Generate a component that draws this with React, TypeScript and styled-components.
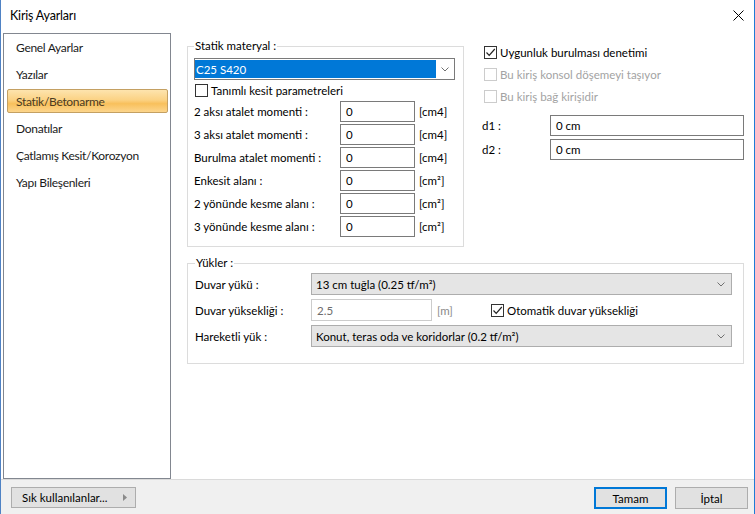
import styled, { createGlobalStyle } from "styled-components";

const GlobalStyle = createGlobalStyle`
  html, body {
    margin: 0;
    padding: 0;
    background: #ffffff;
  }
  body {
    font-family: Lato, "Noto Sans", sans-serif;
    color: #000000;
  }
`;

const Window = styled.div`
  width: 755px;
  height: 514px;
  box-sizing: border-box;
  border-left: 1px solid #4f82c4;
  border-right: 1px solid #1f7bd6;
  background: #ffffff;
  display: flex;
  flex-direction: column;
  overflow: hidden;
`;

const TitleBar = styled.div`
  height: 30px;
  flex: none;
  display: flex;
  align-items: center;
  justify-content: space-between;
  padding: 0 10px 0 9px;
  font-size: 12.5px;
  letter-spacing: -0.2px;
`;

const Body = styled.div`
  height: 450px;
  flex: none;
  box-sizing: border-box;
  border-bottom: 1px solid #dadada;
  display: flex;
  align-items: stretch;
  padding-left: 2px;
`;

const Sidebar = styled.div`
  width: 168px;
  flex: none;
  margin-top: 3px;
  box-sizing: border-box;
  border: 1px solid #828790;
  background: #ffffff;
  padding: 1px 2px 0 3px;
  display: flex;
  flex-direction: column;
  gap: 3px;
`;

const NavItem = styled.div<{ $active?: boolean }>`
  height: 24px;
  box-sizing: border-box;
  display: flex;
  align-items: center;
  padding-left: 8px;
  font-size: 12px;
  letter-spacing: -0.3px;
  border: 1px solid ${(p) => (p.$active ? "#c4a062" : "transparent")};
  border-radius: 2px;
  color: ${(p) => (p.$active ? "#4b3a22" : "#1b1b1b")};
  background: ${(p) =>
    p.$active
      ? "linear-gradient(#fde4ae 0%, #fbd284 45%, #f8c05c 62%, #fcd58c 100%)"
      : "transparent"};
`;

const Content = styled.div`
  flex: 1;
  padding: 9px 10px 0 16px;
  display: flex;
  flex-direction: column;
  gap: 9px;
  font-size: 11.5px;
`;

const TopRow = styled.div`
  display: flex;
  gap: 18px;
  align-items: flex-start;
`;

const Group = styled.fieldset<{ $width?: number; $pad: string }>`
  margin: 0;
  box-sizing: border-box;
  width: ${(p) => (p.$width ? `${p.$width}px` : "auto")};
  min-width: 0;
  border: 1px solid #dcdcdc;
  padding: ${(p) => p.$pad};
  display: flex;
  flex-direction: column;
`;

const Legend = styled.legend`
  padding: 0 1px;
  font-size: 11.5px;
  line-height: 14px;
`;

const Combo = styled.div`
  margin-top: 5px;
  height: 22px;
  box-sizing: border-box;
  border: 1px solid #7a7a7a;
  padding: 1px 0;
  display: flex;
  align-items: stretch;
`;

const ComboSelection = styled.div`
  flex: 1;
  background: #0078d7;
  color: #ffffff;
  display: flex;
  align-items: center;
  padding-left: 1px;
`;

const ChevronBox = styled.div`
  width: 18px;
  display: flex;
  align-items: center;
  justify-content: center;
`;

const CheckRow = styled.label<{ $disabled?: boolean; $height?: number }>`
  height: ${(p) => p.$height ?? 22}px;
  display: flex;
  align-items: center;
  gap: 3px;
  padding-left: ${(p) => (p.$height ? 1 : 2)}px;
  color: ${(p) => (p.$disabled ? "#a3a3a3" : "#000000")};
`;

const Box = styled.span<{ $disabled?: boolean }>`
  width: 13px;
  height: 13px;
  box-sizing: border-box;
  flex: none;
  border: 1px solid ${(p) => (p.$disabled ? "#cccccc" : "#333333")};
  background: #ffffff;
  display: flex;
  align-items: center;
  justify-content: center;
`;

const FieldRow = styled.div`
  height: 23px;
  display: grid;
  grid-template-columns: 146px 75px auto;
  align-items: center;
`;

const TextBox = styled.div<{ $disabled?: boolean }>`
  height: 21px;
  box-sizing: border-box;
  border: 1px solid ${(p) => (p.$disabled ? "#cccccc" : "#7a7a7a")};
  background: #ffffff;
  display: flex;
  align-items: center;
  padding-left: 5px;
  color: ${(p) => (p.$disabled ? "#6d6d6d" : "#000000")};
`;

const Unit = styled.span<{ $muted?: boolean }>`
  margin-left: 4px;
  color: ${(p) => (p.$muted ? "#8a8a8a" : "#000000")};
`;

const RightColumn = styled.div`
  width: 262px;
  margin-top: 2px;
  display: flex;
  flex-direction: column;
`;

const DimRow = styled.div<{ $gap: number }>`
  margin-top: ${(p) => p.$gap}px;
  display: grid;
  grid-template-columns: 68px 1fr;
  align-items: center;
`;

const LoadRow = styled.div<{ $gap: number }>`
  margin-top: ${(p) => p.$gap}px;
  height: 22px;
  display: grid;
  grid-template-columns: 116px 1fr;
  align-items: center;
`;

const GrayCombo = styled.div`
  height: 22px;
  box-sizing: border-box;
  border: 1px solid #adadad;
  background: #e5e5e5;
  display: flex;
  align-items: center;
  justify-content: space-between;
  padding: 0 6px 0 4px;
`;

const HeightCell = styled.div`
  display: flex;
  align-items: center;
`;

const HeightInput = styled(TextBox)`
  width: 121px;
  height: 22px;
`;

const UnitSlot = styled(Unit)`
  margin-left: 5px;
  width: 52px;
`;

const Footer = styled.div`
  flex: 1;
  background: #f0f0f0;
  display: flex;
  justify-content: space-between;
  align-items: flex-start;
  padding: 7px 6px 0 10px;
  font-size: 11.5px;
`;

const Button = styled.div<{ $primary?: boolean; $width?: number }>`
  width: ${(p) => p.$width ?? 73}px;
  height: 22px;
  box-sizing: border-box;
  border: ${(p) => (p.$primary ? "2px solid #0078d7" : "1px solid #adadad")};
  background: #e1e1e1;
  display: flex;
  align-items: center;
  justify-content: center;
`;

const MenuButton = styled(Button)`
  height: 21px;
  justify-content: space-between;
  padding: 0 8px 0 10px;
`;

const ButtonGroup = styled.div`
  display: flex;
  gap: 8px;
`;

const Chevron = () => (
  <svg width="8" height="5" viewBox="0 0 8 5">
    <polyline points="0.5,0.5 4,4 7.5,0.5" fill="none" stroke="#707070" strokeWidth="1" />
  </svg>
);

const Check = () => (
  <svg width="11" height="11" viewBox="0 0 11 11">
    <polyline points="1.5,5.5 4.2,8.3 9.8,2" fill="none" stroke="#222222" strokeWidth="1.2" />
  </svg>
);

const CheckBox = ({ checked, disabled }: { checked?: boolean; disabled?: boolean }) => (
  <Box $disabled={disabled}>{checked && <Check />}</Box>
);

const navItems = [
  "Genel Ayarlar",
  "Yazılar",
  "Statik/Betonarme",
  "Donatılar",
  "Çatlamış Kesit/Korozyon",
  "Yapı Bileşenleri",
];

const sectionFields = [
  { label: "2 aksı atalet momenti :", unit: "[cm4]" },
  { label: "3 aksı atalet momenti :", unit: "[cm4]" },
  { label: "Burulma atalet momenti :", unit: "[cm4]" },
  { label: "Enkesit alanı :", unit: "[cm²]" },
  { label: "2 yönünde kesme alanı :", unit: "[cm²]" },
  { label: "3 yönünde kesme alanı :", unit: "[cm²]" },
];

export default function App() {
  return (
    <>
      <GlobalStyle />
      <Window>
        <TitleBar>
          <span>Kiriş Ayarları</span>
          <svg width="11" height="11" viewBox="0 0 11 11">
            <line x1="0.5" y1="0.5" x2="10.5" y2="10.5" stroke="#000" strokeWidth="1" />
            <line x1="10.5" y1="0.5" x2="0.5" y2="10.5" stroke="#000" strokeWidth="1" />
          </svg>
        </TitleBar>
        <Body>
          <Sidebar>
            {navItems.map((item) => (
              <NavItem key={item} $active={item === "Statik/Betonarme"}>
                {item}
              </NavItem>
            ))}
          </Sidebar>
          <Content>
            <TopRow>
              <Group $width={277} $pad="0 8px 8px 6px">
                <Legend>Statik materyal :</Legend>
                <Combo>
                  <ComboSelection>C25 S420</ComboSelection>
                  <ChevronBox>
                    <Chevron />
                  </ChevronBox>
                </Combo>
                <CheckRow $height={20}>
                  <CheckBox />
                  Tanımlı kesit parametreleri
                </CheckRow>
                {sectionFields.map((f) => (
                  <FieldRow key={f.label}>
                    <span>{f.label}</span>
                    <TextBox>0</TextBox>
                    <Unit>{f.unit}</Unit>
                  </FieldRow>
                ))}
              </Group>
              <RightColumn>
                <CheckRow>
                  <CheckBox checked />
                  Uygunluk burulması denetimi
                </CheckRow>
                <CheckRow $disabled>
                  <CheckBox disabled />
                  Bu kiriş konsol döşemeyi taşıyor
                </CheckRow>
                <CheckRow $disabled>
                  <CheckBox disabled />
                  Bu kiriş bağ kirişidir
                </CheckRow>
                <DimRow $gap={8}>
                  <span>d1 :</span>
                  <TextBox>0 cm</TextBox>
                </DimRow>
                <DimRow $gap={3}>
                  <span>d2 :</span>
                  <TextBox>0 cm</TextBox>
                </DimRow>
              </RightColumn>
            </TopRow>
            <Group $pad="0 11px 16px 7px">
              <Legend>Yükler :</Legend>
              <LoadRow $gap={3}>
                <span>Duvar yükü :</span>
                <GrayCombo>
                  <span>13 cm tuğla (0.25 tf/m²)</span>
                  <Chevron />
                </GrayCombo>
              </LoadRow>
              <LoadRow $gap={4}>
                <span>Duvar yüksekliği :</span>
                <HeightCell>
                  <HeightInput $disabled>2.5</HeightInput>
                  <UnitSlot $muted>[m]</UnitSlot>
                  <CheckRow>
                    <CheckBox checked />
                    Otomatik duvar yüksekliği
                  </CheckRow>
                </HeightCell>
              </LoadRow>
              <LoadRow $gap={4}>
                <span>Hareketli yük :</span>
                <GrayCombo>
                  <span>Konut, teras oda ve koridorlar (0.2 tf/m²)</span>
                  <Chevron />
                </GrayCombo>
              </LoadRow>
            </Group>
          </Content>
        </Body>
        <Footer>
          <MenuButton $width={125}>
            <span>Sık kullanılanlar...</span>
            <svg width="4" height="7" viewBox="0 0 4 7">
              <polygon points="0,0 4,3.5 0,7" fill="#8a8a8a" />
            </svg>
          </MenuButton>
          <ButtonGroup>
            <Button $primary>Tamam</Button>
            <Button>İptal</Button>
          </ButtonGroup>
        </Footer>
      </Window>
    </>
  );
}
